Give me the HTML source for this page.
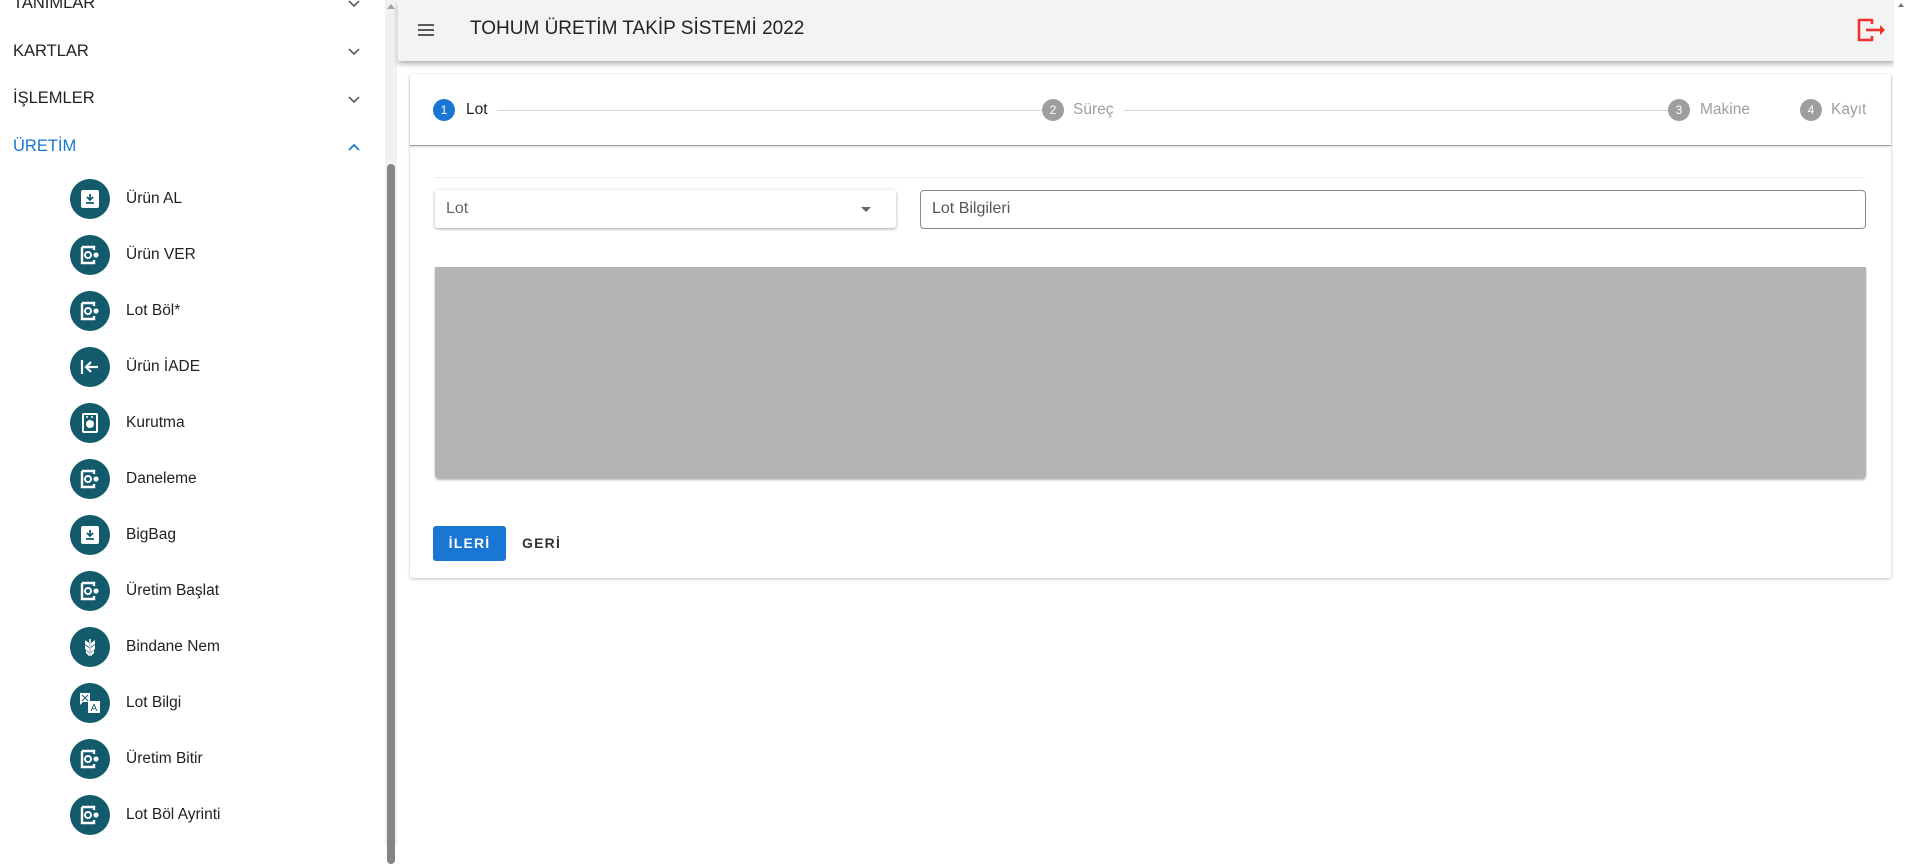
<!DOCTYPE html>
<html><head><meta charset="utf-8">
<style>
*{box-sizing:border-box;margin:0;padding:0}
html,body{width:1909px;height:846px;overflow:hidden;background:#fff;font-family:"Liberation Sans",Roboto,sans-serif;color:#222}
.side{position:absolute;left:0;top:0;width:397px;height:846px;background:#fff}
.sb{position:absolute;left:385px;top:0;width:12px;height:846px;background:#f1f1f1}
.sb .th{position:absolute;left:2px;top:164px;width:8px;height:700px;background:#858585;border-radius:4px}
.sb .up{position:absolute;left:2px;top:4px;width:0;height:0;border-left:4px solid transparent;border-right:4px solid transparent;border-bottom:5px solid #a3a3a3}
.grp{position:absolute;left:13px;font-size:16.5px;color:#222}
.chev{position:absolute;left:347px;width:14px;height:14px}
.item{position:absolute;left:70px;height:40px;display:flex;align-items:center}
.ic{width:40px;height:40px;border-radius:50%;background:#135a6d;display:flex;align-items:center;justify-content:center}
.item span{margin-left:56px;font-size:15.5px;color:#222;position:absolute;left:0;white-space:nowrap}
.hdr{position:absolute;left:398px;top:0;width:1496px;height:61px;background:#f3f3f3;box-shadow:0 3px 5px rgba(0,0,0,.3)}
.hdr .t{position:absolute;left:72px;top:18px;font-size:19px;color:#222}
.psb{position:absolute;left:1894px;top:0;width:15px;height:846px;background:#fff}
.card{position:absolute;left:410px;top:74px;width:1481px;height:504px;background:#fff;box-shadow:0 1px 3px rgba(0,0,0,.25);border-radius:3px}
.steps{position:absolute;left:0;top:0;width:1481px;height:72px;border-bottom:1px solid #9a9a9a;box-shadow:0 1px 2px rgba(0,0,0,.15)}
.c{position:absolute;top:25px;width:22px;height:22px;border-radius:50%;background:#9e9e9e;color:#fff;font-size:12px;text-align:center;line-height:22px}
.sl{position:absolute;top:27px;font-size:15.5px;color:#9e9e9e}
.ln{position:absolute;top:36px;height:1px;background:#d6d6d6}
</style></head><body>
<div class="side">
  <div class="grp" style="top:-6px">TANIMLAR</div>
  <div class="grp" style="top:42px">KARTLAR</div>
  <div class="grp" style="top:89px">İŞLEMLER</div>
  <div class="grp" style="top:137px;color:#1976d2">ÜRETİM</div>
  <svg class="chev" style="top:-3px" viewBox="0 0 14 14"><path d="M2 4l5 5 5-5" fill="none" stroke="#666" stroke-width="1.8"/></svg>
  <svg class="chev" style="top:45px" viewBox="0 0 14 14"><path d="M2 4l5 5 5-5" fill="none" stroke="#666" stroke-width="1.8"/></svg>
  <svg class="chev" style="top:93px" viewBox="0 0 14 14"><path d="M2 4l5 5 5-5" fill="none" stroke="#666" stroke-width="1.8"/></svg>
  <svg class="chev" style="top:140px" viewBox="0 0 14 14"><path d="M2 10l5-5 5 5" fill="none" stroke="#1976d2" stroke-width="1.8"/></svg>

  <div class="item" style="top:179px"><div class="ic"><svg width="20" height="20" viewBox="0 0 20 20"><rect x="1" y="1" width="18" height="18" rx="2" fill="#fff"/><path d="M10 5v6M7 8l3 3 3-3M6 14h8" stroke="#135a6d" stroke-width="1.8" fill="none"/></svg></div><span>Ürün AL</span></div>
  <div class="item" style="top:235px"><div class="ic"><svg width="22" height="22" viewBox="0 0 22 22"><path d="M3 3h12v3M3 3v16h12v-3" stroke="#fff" stroke-width="2.4" fill="none"/><circle cx="9" cy="11" r="3" stroke="#fff" stroke-width="2" fill="none"/><circle cx="17" cy="11" r="2.6" fill="#fff"/></svg></div><span>Ürün VER</span></div>
  <div class="item" style="top:291px"><div class="ic"><svg width="22" height="22" viewBox="0 0 22 22"><path d="M3 3h12v3M3 3v16h12v-3" stroke="#fff" stroke-width="2.4" fill="none"/><circle cx="9" cy="11" r="3" stroke="#fff" stroke-width="2" fill="none"/><circle cx="17" cy="11" r="2.6" fill="#fff"/></svg></div><span>Lot Böl*</span></div>
  <div class="item" style="top:347px"><div class="ic"><svg width="22" height="22" viewBox="0 0 22 22"><path d="M3 4v14M19 11H7M12 6l-5 5 5 5" stroke="#fff" stroke-width="2.2" fill="none"/></svg></div><span>Ürün İADE</span></div>
  <div class="item" style="top:403px"><div class="ic"><svg width="20" height="22" viewBox="0 0 20 22"><rect x="3" y="2" width="14" height="18" rx="1" stroke="#fff" stroke-width="2" fill="none"/><circle cx="10" cy="12" r="4" fill="#fff"/><path d="M6 5h2M11 5h2" stroke="#fff" stroke-width="1.5"/></svg></div><span>Kurutma</span></div>
  <div class="item" style="top:459px"><div class="ic"><svg width="22" height="22" viewBox="0 0 22 22"><path d="M3 3h12v3M3 3v16h12v-3" stroke="#fff" stroke-width="2.4" fill="none"/><circle cx="9" cy="11" r="3" stroke="#fff" stroke-width="2" fill="none"/><circle cx="17" cy="11" r="2.6" fill="#fff"/></svg></div><span>Daneleme</span></div>
  <div class="item" style="top:515px"><div class="ic"><svg width="20" height="20" viewBox="0 0 20 20"><rect x="1" y="1" width="18" height="18" rx="2" fill="#fff"/><path d="M10 5v6M7 8l3 3 3-3M6 14h8" stroke="#135a6d" stroke-width="1.8" fill="none"/></svg></div><span>BigBag</span></div>
  <div class="item" style="top:571px"><div class="ic"><svg width="22" height="22" viewBox="0 0 22 22"><path d="M3 3h12v3M3 3v16h12v-3" stroke="#fff" stroke-width="2.4" fill="none"/><circle cx="9" cy="11" r="3" stroke="#fff" stroke-width="2" fill="none"/><circle cx="17" cy="11" r="2.6" fill="#fff"/></svg></div><span>Üretim Başlat</span></div>
  <div class="item" style="top:627px"><div class="ic"><svg width="20" height="22" viewBox="0 0 20 22"><path d="M10 3v17" stroke="#fff" stroke-width="1.5"/><path d="M9 7L5 4v4l4 3zM11 7l4-3v4l-4 3zM9 12L5 9v4l4 3zM11 12l4-3v4l-4 3zM9 17l-3-3v3l3 3zM11 17l3-3v3l-3 3z" fill="#fff"/></svg></div><span>Bindane Nem</span></div>
  <div class="item" style="top:683px"><div class="ic"><svg width="24" height="24" viewBox="0 0 24 24"><path d="M2 2h10v9H5l-3 3z" fill="#fff"/><path d="M4 4l6 6M10 4l-6 6" stroke="#135a6d" stroke-width="1"/><rect x="10" y="10" width="12" height="12" fill="#fff"/><text x="16" y="20" font-size="10" font-family="Liberation Sans" text-anchor="middle" fill="#135a6d">A</text></svg></div><span>Lot Bilgi</span></div>
  <div class="item" style="top:739px"><div class="ic"><svg width="22" height="22" viewBox="0 0 22 22"><path d="M3 3h12v3M3 3v16h12v-3" stroke="#fff" stroke-width="2.4" fill="none"/><circle cx="9" cy="11" r="3" stroke="#fff" stroke-width="2" fill="none"/><circle cx="17" cy="11" r="2.6" fill="#fff"/></svg></div><span>Üretim Bitir</span></div>
  <div class="item" style="top:795px"><div class="ic"><svg width="22" height="22" viewBox="0 0 22 22"><path d="M3 3h12v3M3 3v16h12v-3" stroke="#fff" stroke-width="2.4" fill="none"/><circle cx="9" cy="11" r="3" stroke="#fff" stroke-width="2" fill="none"/><circle cx="17" cy="11" r="2.6" fill="#fff"/></svg></div><span>Lot Böl Ayrinti</span></div>
  <div class="sb"><div class="up"></div><div class="th"></div></div>
</div>

<div class="hdr">
  <svg style="position:absolute;left:18px;top:20px" width="20" height="20" viewBox="0 0 20 20"><path d="M2 5h16M2 10h16M2 15h16" stroke="#444" stroke-width="1.8"/></svg>
  <div class="t">TOHUM ÜRETİM TAKİP SİSTEMİ 2022</div>
  <svg style="position:absolute;left:1458px;top:17px" width="32" height="26" viewBox="0 0 32 26"><path d="M16 7V3H3v20h13v-4" stroke="#f0312c" stroke-width="2.6" fill="none" stroke-linejoin="round"/><path d="M10 13h16" stroke="#f0312c" stroke-width="2.6"/><path d="M24 8l5 5-5 5z" fill="#f0312c"/></svg>
</div>
<div class="psb"><div style="position:absolute;left:4px;top:3px;border-left:3px solid transparent;border-right:3px solid transparent;border-bottom:4px solid #777"></div></div>

<div class="card">
  <div class="steps">
    <div class="c" style="left:23px;background:#1976d2">1</div><div class="sl" style="left:56px;color:#222">Lot</div>
    <div class="ln" style="left:87px;width:547px"></div>
    <div class="c" style="left:632px">2</div><div class="sl" style="left:663px">Süreç</div>
    <div class="ln" style="left:714px;width:546px"></div>
    <div class="c" style="left:1258px">3</div><div class="sl" style="left:1290px">Makine</div>
    <div class="c" style="left:1390px">4</div><div class="sl" style="left:1421px">Kayıt</div>
  </div>
  <div style="position:absolute;left:25px;top:103px;width:1431px;height:1px;background:#eee"></div>
  <div style="position:absolute;left:25px;top:116px;width:461px;height:38px;background:#fff;border-radius:3px;box-shadow:0 1px 3px rgba(0,0,0,.35)">
    <div style="position:absolute;left:11px;top:10px;font-size:16px;color:#666">Lot</div>
    <div style="position:absolute;left:426px;top:17px;border-left:5px solid transparent;border-right:5px solid transparent;border-top:5px solid #666"></div>
  </div>
  <div style="position:absolute;left:510px;top:116px;width:946px;height:39px;border:1px solid #8a8a8a;border-radius:4px">
    <div style="position:absolute;left:11px;top:9px;font-size:16px;color:#555">Lot Bilgileri</div>
  </div>
  <div style="position:absolute;left:25px;top:193px;width:1431px;height:211px;background:#b4b4b4;border-radius:0 0 4px 4px;box-shadow:0 2px 2px rgba(0,0,0,.3)"></div>
  <div style="position:absolute;left:23px;top:452px;width:73px;height:35px;background:#1976d2;border-radius:3px;color:#fff;font-size:14px;font-weight:bold;letter-spacing:1.2px;text-align:center;line-height:35px">İLERİ</div>
  <div style="position:absolute;left:112px;top:452px;height:35px;color:#333;font-size:14px;font-weight:bold;letter-spacing:1.2px;line-height:35px">GERİ</div>
</div>
</body></html>
